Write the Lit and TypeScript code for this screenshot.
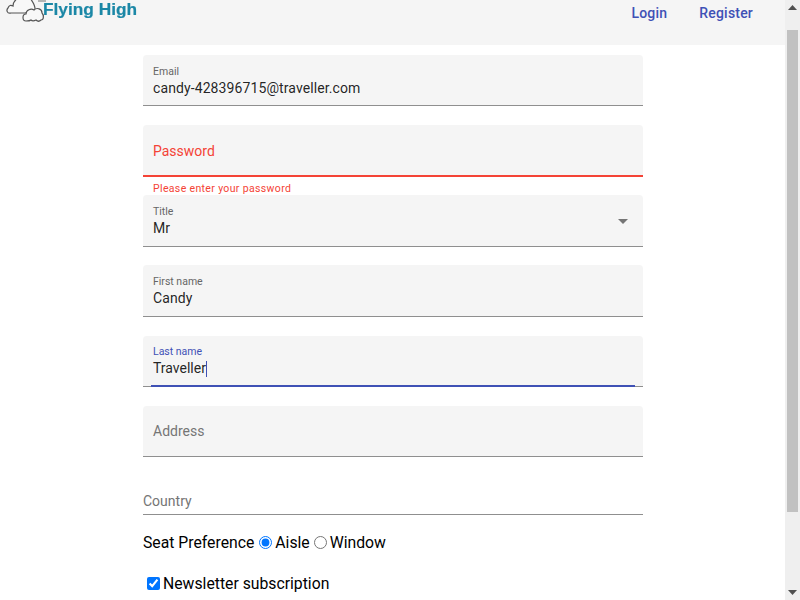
import { LitElement, html, css, svg } from "lit";
import { customElement } from "lit/decorators.js";

@customElement("app-root")
export class AppRoot extends LitElement {
  static styles = css`
    :host { display: flex; width: 800px; height: 600px; overflow: hidden; background: #fff;
      font-family: Roboto, "Liberation Sans", sans-serif; color: rgba(0,0,0,.87); font-size: 14px; }
    .page { flex: 1; min-width: 0; display: flex; flex-direction: column; }
    header { height: 45px; flex: none; background: #f5f5f5; display: flex; justify-content: space-between; padding-right: 16px; box-sizing: border-box; }
    .logo { display: flex; align-items: flex-start; height: 24px; filter: blur(.3px); }
    .logo svg { flex: none; display: block; }
    .logo span { font-family: "Liberation Sans", sans-serif; font-weight: 700; font-size: 17.3px; line-height: 20px; color: #1b87a6; margin: -1px 0 0 -3px; -webkit-text-stroke: .2px #1b87a6; }
    nav { display: flex; height: 26px; }
    nav a { padding: 0 16px; font-weight: 500; font-size: 14px; line-height: 26px; color: #3f51b5; letter-spacing: .2px; }
    form { width: 500px; margin: 10px 0 0 143px; display: flex; flex-direction: column; }
    .field { height: 51.25px; box-sizing: border-box; background: #f5f5f5; border-radius: 4px 4px 0 0; border-bottom: 1px solid #8f8f8f; padding: 0 10px; position: relative; margin-bottom: 19px; display: flex; flex-direction: column; }
    .field.title { height: 51.5px; margin-bottom: 18.75px; }
    .label { font-size: 10.5px; line-height: 12px; margin-top: 11px; color: #666; }
    .value { font-size: 14px; line-height: 17px; margin-top: 2px; color: rgba(0,0,0,.87); display: flex; align-items: center; letter-spacing: .1px; }
    .ph { font-size: 14px; line-height: 17px; margin-top: 18px; color: #757575; }
    .addr { margin-top: 17px; }
    .field.error { border-bottom: 2px solid #f44336; margin-bottom: 0; }
    .field.error .ph { color: #f44336; }
    .hint { font-size: 10.5px; line-height: 12px; color: #f44336; padding: 6px 10px 0; letter-spacing: .35px; height: 12.5px; }
    .arrow { position: absolute; right: 15px; top: 24px; width: 0; height: 0; border-left: 5.25px solid transparent; border-right: 5.25px solid transparent; border-top: 5.25px solid #757575; }
    .field.focus .label { color: #3f51b5; margin-top: 10.25px; }
    .field.focus .value { letter-spacing: 0; margin-top: 2.5px; }
    .caret { width: 1px; height: 16px; background: #3f51b5; }
    .ink { position: absolute; left: 8px; right: 8px; bottom: -1px; height: 2px; background: #3f51b5; }
    .plain { height: 39px; box-sizing: border-box; border-bottom: 1px solid #8f8f8f; display: flex; align-items: flex-end; padding-bottom: 4px; margin-bottom: 18px; }
    .plain .ph { margin: 0; }
    .seat { display: flex; align-items: center; font-size: 15.75px; line-height: 20px; color: #000; height: 20px; }
    .seat input { margin: -2px 3px 0 4px; width: 13px; height: 13px; }
    .seat input:first-of-type { margin-left: 5px; }
    .news { display: flex; align-items: center; font-size: 15.75px; line-height: 20px; color: #000; margin-top: 21px; padding-left: 4px; }
    .news input { margin: -2px 3px 0 0; width: 13px; height: 13px; }
    .bar { width: 15px; flex: none; background: #efefef; display: flex; flex-direction: column; align-items: center; height: 600px; }
    .up, .down { height: 15px; flex: none; display: flex; align-items: center; justify-content: center; }
    .trk { flex: 1; width: 100%; box-sizing: border-box; padding: 15px 2px 73px; display: flex; }
    .thumb { flex: 1; background: #c1c1c1; }
  `;

  render() {
    return html`
      <div class="page">
        <header>
          <div class="logo">
            <svg width="46" height="24" viewBox="0 0 46 24" fill="#f8f8f8" stroke="#555" stroke-width="1.2">
              ${svg`<path d="M11 13C7 14 6 10 8 8C9 5 11 5 13 6C13 2 15 0 18 -2L30 -2C33 2 36 6 35 11L25 13Z"/>
              <path d="M26 21C22 21 22 14 26 14C26 10 31 8 34 10C37 7 42 9 42 13C44 15 44 20 41 20C39 22 37 21 36 20C34 21 32 21 31 20C30 21 28 21 26 21Z"/>
              <path d="M38 1h8" stroke="#888" fill="none"/>`}
            </svg>
            <span>Flying High</span>
          </div>
          <nav><a>Login</a><a>Register</a></nav>
        </header>
        <form>
          <div class="field"><div class="label">Email</div><div class="value">candy-428396715@traveller.com</div></div>
          <div class="field error"><div class="ph">Password</div></div>
          <div class="hint">Please enter your password</div>
          <div class="field title"><div class="label">Title</div><div class="value">Mr</div><div class="arrow"></div></div>
          <div class="field"><div class="label">First name</div><div class="value">Candy</div></div>
          <div class="field focus"><div class="label">Last name</div><div class="value">Traveller<span class="caret"></span></div><div class="ink"></div></div>
          <div class="field"><div class="ph addr">Address</div></div>
          <div class="plain"><div class="ph">Country</div></div>
          <div class="seat">Seat Preference<input type="radio" name="s" checked /><label>Aisle</label><input type="radio" name="s" /><label>Window</label></div>
          <div class="news"><input type="checkbox" checked /><label>Newsletter subscription</label></div>
        </form>
      </div>
      <div class="bar">
        <div class="up"><svg width="9" height="6" viewBox="0 0 9 6"><path d="M4.5 0L9 5H0z" fill="#505050"/></svg></div>
        <div class="trk"><div class="thumb"></div></div>
        <div class="down"><svg width="9" height="6" viewBox="0 0 9 6"><path d="M0 0h9L4.5 5z" fill="#505050"/></svg></div>
      </div>
    `;
  }
}
